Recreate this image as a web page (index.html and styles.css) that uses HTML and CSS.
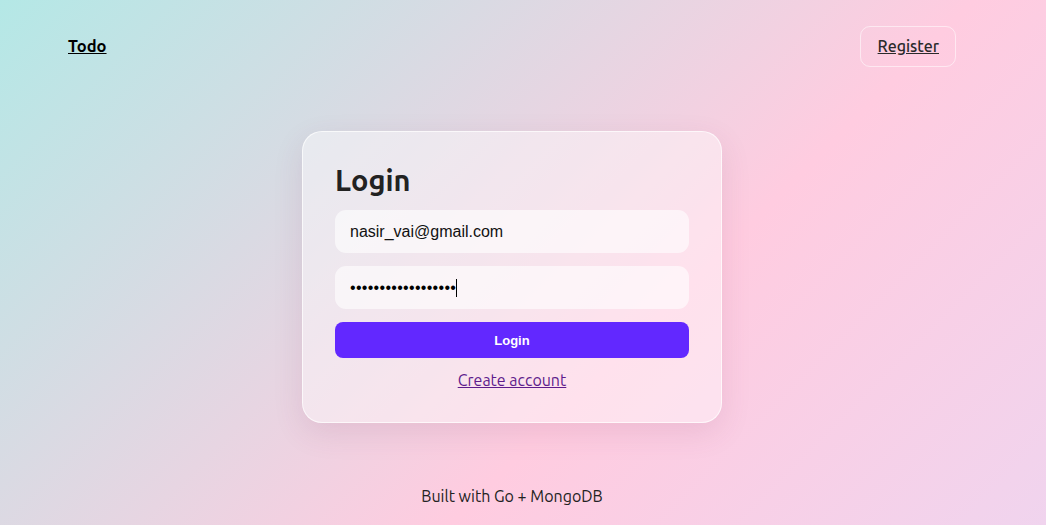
FILE: index.html
```html
<!DOCTYPE html>
<html lang="en">
<head>
<meta charset="utf-8">
<title>Login</title>
<link rel="stylesheet" href="styles.css">
</head>
<body>
<div class="page">
  <header class="nav">
    <a class="brand" href="#">Todo</a>
    <a class="nav-btn" href="#">Register</a>
  </header>
  <main class="main">
    <form class="card">
      <h1 class="title">Login</h1>
      <input class="field" type="email" value="nasir_vai@gmail.com">
      <div class="field pw"><span class="dots">••••••••••••••••••</span><span class="caret"></span></div>
      <button class="btn" type="button">Login</button>
      <a class="link" href="#">Create account</a>
    </form>
  </main>
  <footer class="footer">Built with Go + MongoDB</footer>
</div>
</body>
</html>
```
FILE: styles.css
```css
html, body {
  margin: 0;
  height: 100%;
}
body {
  background: linear-gradient(135deg, #b4e8e6 0%, #ffcce0 62%, #f0d4ee 100%);
  font-family: "Ubuntu", "Lato", "Noto Sans", sans-serif;
  color: #222;
}
.page {
  width: 1024px;
  height: 525px;
  display: flex;
  flex-direction: column;
}
.nav {
  display: flex;
  justify-content: space-between;
  align-items: center;
  padding: 26px 68px 0;
  height: 41px;
}
.brand {
  color: #000;
  font-weight: 700;
  font-size: 16.5px;
  padding-bottom: 2px;
}
.nav-btn {
  color: #2a2a2a;
  font-size: 16px;
  font-weight: 500;
  border: 1px solid rgba(255,255,255,0.55);
  border-radius: 10px;
  padding: 8px 16px 8px 17px;
  line-height: 23px;
}
.main {
  display: flex;
  justify-content: center;
  padding-top: 64px;
}
.card {
  width: 354px;
  padding: 29px 32px 32px;
  border: 1px solid rgba(255,255,255,0.7);
  border-radius: 20px;
  background: rgba(255,255,255,0.42);
  box-shadow: 0 10px 30px rgba(120,60,100,0.12);
  display: flex;
  flex-direction: column;
}
.title {
  margin: 0 0 11px;
  font-size: 29px;
  font-weight: 700;
  line-height: 38px;
  color: #222;
}
.field {
  box-sizing: border-box;
  height: 43px;
  width: 100%;
  border: none;
  border-radius: 11px;
  background: rgba(255,255,255,0.6);
  padding: 0 15px;
  font-family: "Liberation Sans", Arial, sans-serif;
  font-size: 16px;
  color: #111;
  margin-bottom: 13px;
  outline: none;
}
.pw {
  display: flex;
  align-items: center;
}
.dots {
  font-family: "Liberation Sans", Arial, sans-serif;
  font-size: 16px;
  letter-spacing: 0.3px;
  color: #000;
}
.caret {
  width: 1px;
  height: 18px;
  background: #000;
}
.btn {
  height: 36px;
  border: none;
  border-radius: 8px;
  background: #6228ff;
  color: #fff;
  font-family: "Liberation Sans", Arial, sans-serif;
  font-weight: 700;
  font-size: 13px;
}
.link {
  align-self: center;
  margin-top: 12px;
  color: #5e1c8c;
  font-size: 16px;
  line-height: 20px;
}
.footer {
  margin-top: auto;
  text-align: center;
  padding-bottom: 20px;
  font-size: 16px;
  color: #222;
}
```
